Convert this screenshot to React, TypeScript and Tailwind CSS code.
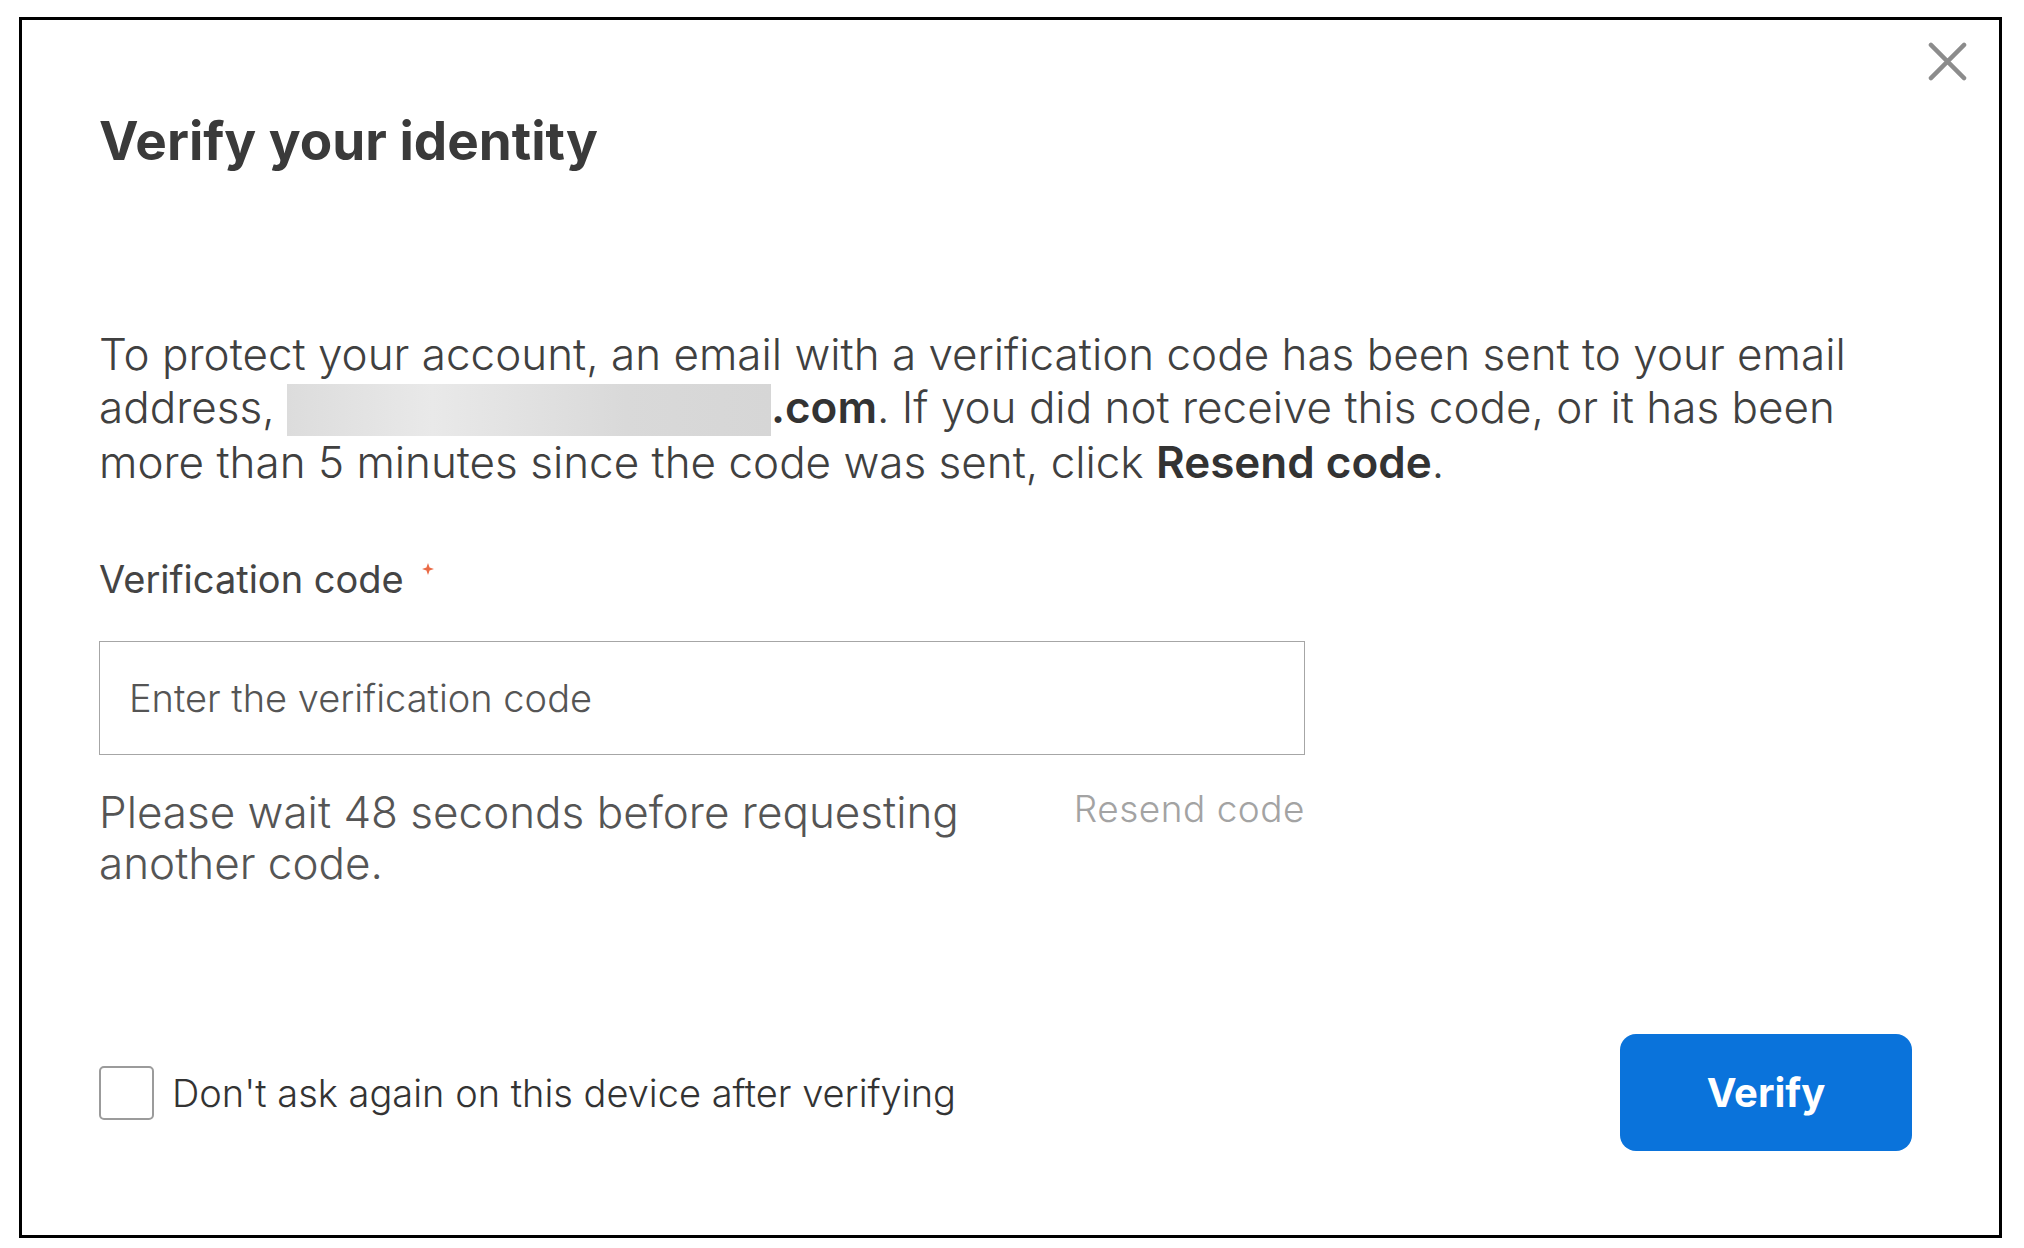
import React from "react";

const FONT = { fontFamily: "Inter, 'Noto Sans', sans-serif" };

export default function App() {
  return (
    <div className="w-[2024px] h-[1248px] bg-white pt-[17px] pl-[19px]" style={FONT}>
      <div className="relative w-[1983px] h-[1221px] border-[3px] border-black flex flex-col pl-[77px]">
        <button className="absolute right-[32px] top-[22px] w-[39px] h-[39px]" aria-label="Close">
          <svg viewBox="0 0 40 40" className="w-full h-full">
            <path d="M3 3 L37 37 M37 3 L3 37" stroke="#8c8c8c" strokeWidth="4.5" strokeLinecap="round" />
          </svg>
        </button>

        <h1 className="mt-[95px] text-[53px] leading-[53px] font-bold text-[#3a3a3a]">Verify your identity</h1>

        <p className="mt-[160px] text-[44px] leading-[53px] font-light text-[#404040]">
          To protect your account, an email with a verification code has been sent to your email
          <br />
          address,{" "}
          <span className="inline-block w-[484px] h-[52px] align-[-13px] bg-[linear-gradient(90deg,#dcdcdc_0%,#e9e9e9_30%,#d9d9d9_70%,#d6d6d6_100%)]"></span>
          <span className="font-semibold text-[#333]">.com</span>. If you did not receive this code, or it has been
          <br />
          more than 5 minutes since the code was sent, click <span className="font-semibold text-[#333]">Resend code</span>.
        </p>

        <label className="mt-[66px] h-[48px] text-[38px] leading-[48px] text-[#444] flex items-start">
          Verification code
          <svg viewBox="0 0 10 10" className="ml-[18px] mt-[8px] w-[12px] h-[12px]">
            <path d="M5 0 L6.3 3.7 L10 5 L6.3 6.3 L5 10 L3.7 6.3 L0 5 L3.7 3.7 Z" fill="#ea6a45" />
          </svg>
        </label>

        <div className="mt-[38px] w-[1206px] h-[114px] border-[1.5px] border-[#a6a6a6] flex items-center pl-[29px]">
          <input
            className="w-full bg-transparent outline-none text-[38px] font-light text-[#555] placeholder:text-[#555]"
            style={FONT}
            placeholder="Enter the verification code"
          />
        </div>

        <div className="mt-[32px] w-[1206px] flex justify-between items-start">
          <div className="text-[44px] leading-[51px] font-light text-[#555]">
            Please wait 48 seconds before requesting
            <br />
            another code.
          </div>
          <div className="text-[37px] leading-[43px] font-light tracking-[0.5px] text-[#a3a3a3]">Resend code</div>
        </div>

        <div className="mt-auto mb-[84px] w-[1813px] h-[117px] flex items-center justify-between">
          <label className="flex items-center gap-[18px]">
            <span className="w-[55px] h-[54px] border-[2.5px] border-[#9b9b9b] rounded-[5px] bg-white"></span>
            <span className="text-[38px] leading-[48px] font-light text-[#333]">Don't ask again on this device after verifying</span>
          </label>
          <button className="w-[292px] h-[117px] rounded-[16px] bg-[#0a73db] text-white text-[40px] font-bold">Verify</button>
        </div>
      </div>
    </div>
  );
}
